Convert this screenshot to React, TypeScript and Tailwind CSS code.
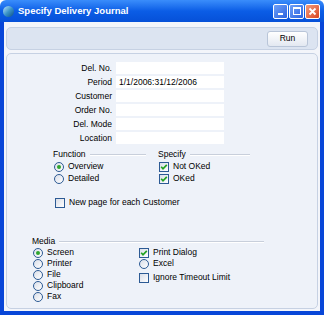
import React from "react";

const font = { fontFamily: '"Liberation Sans", Arial, sans-serif' };

function Radio({ checked = false }: { checked?: boolean }) {
  return (
    <span className="flex h-[10px] w-[10px] shrink-0 items-center justify-center rounded-full border border-[#2c5a94] bg-gradient-to-br from-[#d9dee8] to-white">
      {checked && <span className="h-[4px] w-[4px] rounded-full bg-[#2fa52f]" />}
    </span>
  );
}

function Check({ checked = false }: { checked?: boolean }) {
  return (
    <span className="flex h-[10px] w-[10px] shrink-0 items-center justify-center border border-[#2c5a94] bg-gradient-to-br from-[#d9dee8] to-white">
      {checked && (
        <svg width="8" height="8" viewBox="0 0 8 8">
          <path d="M1.2 3.8 L3 5.8 L6.8 1.8" fill="none" stroke="#21a121" strokeWidth="1.7" />
        </svg>
      )}
    </span>
  );
}

function Opt({ kind, checked, label, className }: { kind: "radio" | "check"; checked?: boolean; label: string; className?: string }) {
  return (
    <div className={"ml-[1px] flex h-[11px] items-center gap-[4px] " + (className ?? "")}>
      {kind === "radio" ? <Radio checked={checked} /> : <Check checked={checked} />}
      <span className="leading-none">{label}</span>
    </div>
  );
}

function Heading({ label, className }: { label: string; className?: string }) {
  return (
    <div className={"flex items-center gap-[4px] " + (className ?? "")}>
      <span className="leading-none">{label}</span>
      <span className="h-[2px] flex-1 border-t border-[#c8cfdb] bg-white" />
    </div>
  );
}

function Field({ label, value }: { label: string; value?: string }) {
  return (
    <div className="flex h-[12px] items-center">
      <span className="w-[109px] pr-[4px] text-right leading-none">{label}</span>
      <div className="flex h-[12px] w-[108px] items-center bg-white pl-[3px] leading-none">{value}</div>
    </div>
  );
}

function TitleButton({ children, red }: { children: React.ReactNode; red?: boolean }) {
  return (
    <div
      className={
        "flex h-[15px] w-[15px] items-center justify-center rounded-[2px] border border-white " +
        (red ? "bg-gradient-to-br from-[#f29a7a] to-[#d8441c]" : "bg-gradient-to-br from-[#6fa0f8] to-[#2b62df]")
      }
    >
      {children}
    </div>
  );
}

export default function App() {
  return (
    <div className="flex h-[315px] w-[324px] flex-col overflow-hidden text-[8.5px] text-black" style={font}>
      <div className="flex h-[22px] items-center rounded-t-[6px] bg-gradient-to-b from-[#3a8dfb] via-[#0b5de6] to-[#0650d8] pl-[3px] pr-[4px]">
        <span className="h-[11px] w-[11px] rounded-full bg-gradient-to-br from-[#b7e6ff] via-[#3b95c9] to-[#0b4f86]" />
        <span className="ml-[4px] flex-1 text-[9.5px] font-bold text-white">Specify Delivery Journal</span>
        <div className="flex gap-[1px]">
          <TitleButton>
            <span className="mt-[6px] h-[2px] w-[5px] bg-white" />
          </TitleButton>
          <TitleButton>
            <span className="h-[8px] w-[8px] border border-t-2 border-white" />
          </TitleButton>
          <TitleButton red>
            <svg width="9" height="9" viewBox="0 0 9 9">
              <path d="M1.5 1.5 L7.5 7.5 M7.5 1.5 L1.5 7.5" stroke="white" strokeWidth="1.8" />
            </svg>
          </TitleButton>
        </div>
      </div>
      <div className="flex flex-1 flex-col gap-[3px] border-x-[4px] border-b-[4px] border-[#0846d8] bg-[#f3f5fa] px-[2px] pt-[5px] pb-[2px]">
        <div className="flex h-[23px] items-center justify-end rounded-[5px] border border-[#c6d1e3] bg-[#dce4f1] pr-[9px]">
          <div className="flex h-[16px] w-[41px] items-center justify-center rounded-[3px] border border-[#b9c5d8] bg-gradient-to-b from-white to-[#e3e8f1] leading-none">
            Run
          </div>
        </div>
        <div className="flex flex-1 flex-col rounded-[5px] border border-[#c6d1e3] bg-[#eef2f9] pt-[8px]">
          <div className="flex flex-col gap-[2px]">
            <Field label="Del. No." />
            <Field label="Period" value="1/1/2006:31/12/2006" />
            <Field label="Customer" />
            <Field label="Order No." />
            <Field label="Del. Mode" />
            <Field label="Location" />
          </div>
          <div className="mt-[5px] flex pl-[46px]">
            <div className="flex w-[105px] flex-col gap-[1px] pr-[12px]">
              <Heading label="Function" className="h-[11px]" />
              <Opt kind="radio" checked label="Overview" />
              <Opt kind="radio" label="Detailed" />
            </div>
            <div className="flex w-[92px] flex-col gap-[1px]">
              <Heading label="Specify" className="h-[11px]" />
              <Opt kind="check" checked label="Not OKed" className="ml-0" />
              <Opt kind="check" checked label="OKed" className="ml-0" />
            </div>
          </div>
          <div className="mt-[13px] pl-[47px]">
            <Opt kind="check" label="New page for each Customer" />
          </div>
          <div className="mt-[28px] flex flex-col pl-[25px] pr-[53px]">
            <Heading label="Media" className="h-[11px]" />
            <div className="flex">
              <div className="flex w-[106px] flex-col">
                <Opt kind="radio" checked label="Screen" />
                <Opt kind="radio" label="Printer" />
                <Opt kind="radio" label="File" />
                <Opt kind="radio" label="Clipboard" />
                <Opt kind="radio" label="Fax" />
              </div>
              <div className="flex flex-col">
                <Opt kind="check" checked label="Print Dialog" className="ml-0" />
                <Opt kind="radio" label="Excel" className="ml-0" />
                <Opt kind="check" label="Ignore Timeout Limit" className="ml-0 mt-[3px]" />
              </div>
            </div>
          </div>
        </div>
      </div>
    </div>
  );
}
